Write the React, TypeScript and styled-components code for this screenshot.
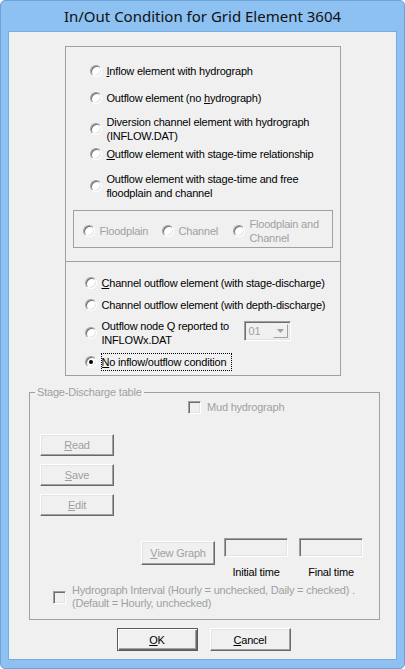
import React from 'react';
import styled, { createGlobalStyle } from 'styled-components';

const GlobalStyle = createGlobalStyle`
  html, body {
    margin: 0;
    padding: 0;
    background: #ffffff;
  }
  body {
    font-family: "Liberation Sans", Arial, sans-serif;
  }
  * {
    box-sizing: border-box;
  }
`;

const Window = styled.div`
  width: 405px;
  height: 669px;
  display: flex;
  flex-direction: column;
  background: #8cc1f2;
  border: 1px solid #6fa3d8;
  border-radius: 5px;
  overflow: hidden;
`;

const TitleBar = styled.div`
  height: 30px;
  display: flex;
  align-items: center;
  justify-content: center;
  font-family: "Noto Sans", "Open Sans", sans-serif;
  font-size: 15px;
  color: #111;
`;

const Client = styled.div`
  flex: 1;
  margin: 0 7px 8px;
  background: #f0f0f0;
  border: 1px solid #78abdf;
  display: flex;
  flex-direction: column;
`;

const OptionsStack = styled.div`
  width: 276px;
  margin: 14px auto 0;
  display: flex;
  flex-direction: column;
`;

const Panel = styled.div<{ $joined?: boolean; $padX: number; $padLeft?: number; $padBottom: number }>`
  border: 1px solid #a0a0a0;
  border-top: ${(p) => (p.$joined ? 'none' : '1px solid #a0a0a0')};
  padding: 0 ${(p) => p.$padX}px ${(p) => p.$padBottom}px ${(p) => p.$padLeft ?? p.$padX}px;
  display: flex;
  flex-direction: column;
  align-items: flex-start;
`;

const OptionRow = styled.div<{ $mt: number; $indent?: number }>`
  display: flex;
  align-items: center;
  gap: 5px;
  margin-top: ${(p) => p.$mt}px;
  padding-left: ${(p) => p.$indent ?? 0}px;
`;

const Label = styled.span<{ $disabled?: boolean; $w?: number; $lh?: number }>`
  font-size: 11px;
  line-height: ${(p) => p.$lh ?? 14}px;
  letter-spacing: -0.2px;
  color: ${(p) => (p.$disabled ? '#a0a0a0' : '#000')};
  white-space: nowrap;
  ${(p) => (p.$w ? `width: ${p.$w}px;` : '')}
`;

const Key = styled.span`
  text-decoration: underline;
  text-underline-offset: 1px;
`;

const Radio = styled.span<{ $checked?: boolean }>`
  position: relative;
  flex: none;
  width: 12px;
  height: 12px;
  border-radius: 50%;
  background: #ffffff;
  border: 1px solid;
  border-color: #a0a0a0 #ffffff #ffffff #a0a0a0;
  box-shadow: inset 1px 1px 0 #6e6e6e, inset -1px -1px 0 #e3e3e3;
  &::after {
    content: '';
    display: ${(p) => (p.$checked ? 'block' : 'none')};
    position: absolute;
    left: 3px;
    top: 3px;
    width: 4px;
    height: 4px;
    border-radius: 50%;
    background: #000;
  }
`;

const Checkbox = styled.span`
  flex: none;
  width: 13px;
  height: 13px;
  background: #f0f0f0;
  border: 1px solid;
  border-color: #a0a0a0 #ffffff #ffffff #a0a0a0;
  box-shadow: inset 1px 1px 0 #6e6e6e, inset -1px -1px 0 #e3e3e3;
`;

const SubGroup = styled.div`
  margin-top: 10px;
  width: 260px;
  height: 38px;
  border: 1px solid #a0a0a0;
  display: flex;
  align-items: center;
  padding: 3px 0 0 9px;
`;

const SubItem = styled.div<{ $w?: number }>`
  display: flex;
  align-items: center;
  gap: 5px;
  ${(p) => (p.$w ? `width: ${p.$w}px;` : '')}
`;

const Combo = styled.div`
  align-self: flex-start;
  margin-top: 2px;
  width: 47px;
  height: 20px;
  display: flex;
  align-items: stretch;
  background: #f0f0f0;
  border: 1px solid;
  border-color: #a0a0a0 #ffffff #ffffff #a0a0a0;
  box-shadow: inset 1px 1px 0 #6e6e6e, inset -1px -1px 0 #e3e3e3;
  padding: 2px;
`;

const ComboText = styled.span`
  flex: 1;
  font-size: 11px;
  line-height: 14px;
  color: #a0a0a0;
  padding-left: 2px;
`;

const ComboArrow = styled.span`
  width: 15px;
  display: flex;
  align-items: center;
  justify-content: center;
  background: #f0f0f0;
  border: 1px solid;
  border-color: #f4f4f4 #a0a0a0 #a0a0a0 #f4f4f4;
`;

const FocusLabel = styled.span`
  width: 131px;
  overflow: hidden;
  border: 1px dotted #000;
  padding: 1px 0 1px 0;
  font-size: 11px;
  line-height: 14px;
  letter-spacing: -0.2px;
  white-space: nowrap;
  color: #000;
`;

const StageGroup = styled.fieldset`
  margin: 9px 0 0 20px;
  width: 351px;
  min-width: 0;
  border: 1px solid #a0a0a0;
  padding: 0 0 9px 0;
  display: flex;
  flex-direction: column;
  align-items: flex-start;
`;

const Legend = styled.legend`
  margin-left: 5px;
  padding: 0 2px;
  font-size: 11px;
  line-height: 14px;
  letter-spacing: -0.2px;
  color: #a0a0a0;
`;

const CheckRow = styled.div<{ $mt: number; $indent: number }>`
  display: flex;
  align-items: center;
  gap: 6px;
  margin-top: ${(p) => p.$mt}px;
  padding-left: ${(p) => p.$indent}px;
`;

const ButtonColumn = styled.div`
  margin: 20px 0 0 10px;
  display: flex;
  flex-direction: column;
  gap: 8px;
`;

const ClassicButton = styled.div<{ $h?: number; $disabled?: boolean }>`
  width: 74px;
  height: ${(p) => p.$h ?? 22}px;
  display: flex;
  align-items: center;
  justify-content: center;
  background: #f0f0f0;
  border: 1px solid;
  border-color: #ffffff #696969 #696969 #ffffff;
  box-shadow: inset -1px -1px 0 #a0a0a0, inset 1px 1px 0 #e3e3e3;
  font-size: 11px;
  letter-spacing: -0.2px;
  color: ${(p) => (p.$disabled ? '#a0a0a0' : '#000')};
`;

const GraphRow = styled.div`
  margin-top: 22px;
  padding-left: 111px;
  display: flex;
  align-items: flex-start;
  gap: 9px;
`;

const GraphButton = styled(ClassicButton)`
  margin-top: 3px;
  margin-right: 0;
`;

const TimeFields = styled.div`
  display: flex;
  gap: 11px;
`;

const TimeField = styled.div`
  width: 64px;
  display: flex;
  flex-direction: column;
  align-items: center;
`;

const TimeBox = styled.div`
  width: 64px;
  height: 19px;
  background: #f0f0f0;
  border: 1px solid;
  border-color: #a0a0a0 #ffffff #ffffff #a0a0a0;
  box-shadow: inset 1px 1px 0 #6e6e6e, inset -1px -1px 0 #e3e3e3;
`;

const TimeLabel = styled.span`
  margin-top: 8px;
  font-size: 11px;
  line-height: 14px;
  letter-spacing: -0.2px;
  color: #000;
  white-space: nowrap;
`;

const Footer = styled.div`
  margin-top: 8px;
  padding-left: 2px;
  display: flex;
  justify-content: center;
  gap: 12px;
`;

const DialogButton = styled.div<{ $primary?: boolean }>`
  width: 81px;
  height: 23px;
  display: flex;
  align-items: center;
  justify-content: center;
  background: #f0f0f0;
  font-size: 11px;
  letter-spacing: -0.2px;
  color: #000;
  border: 1px solid;
  border-color: ${(p) => (p.$primary ? '#5a5a5a' : '#ffffff #696969 #696969 #ffffff')};
  box-shadow: ${(p) =>
    p.$primary
      ? 'inset 1px 1px 0 #ffffff, inset -1px -1px 0 #696969, inset -2px -2px 0 #a0a0a0'
      : 'inset -1px -1px 0 #a0a0a0, inset 1px 1px 0 #e3e3e3'};
`;

function ArrowDown() {
  return (
    <svg width="7" height="4" viewBox="0 0 7 4">
      <path d="M0 0 H7 L3.5 4 Z" fill="#a0a0a0" />
    </svg>
  );
}

export default function App() {
  return (
    <>
      <GlobalStyle />
      <Window>
        <TitleBar>In/Out Condition for Grid Element 3604</TitleBar>
        <Client>
          <OptionsStack>
            <Panel $padX={7} $padBottom={13}>
              <OptionRow $mt={17} $indent={17}>
                <Radio />
                <Label>
                  <Key>I</Key>nflow element with hydrograph
                </Label>
              </OptionRow>
              <OptionRow $mt={13} $indent={17}>
                <Radio />
                <Label>
                  Outflow element (no <Key>h</Key>ydrograph)
                </Label>
              </OptionRow>
              <OptionRow $mt={10} $indent={17}>
                <Radio />
                <Label>
                  Diversion channel element with hydrograph
                  <br />
                  (INFLOW.DAT)
                </Label>
              </OptionRow>
              <OptionRow $mt={4} $indent={17}>
                <Radio />
                <Label>
                  <Key>O</Key>utflow element with stage-time relationship
                </Label>
              </OptionRow>
              <OptionRow $mt={11} $indent={17}>
                <Radio />
                <Label>
                  Outflow element with stage-time and free
                  <br />
                  floodplain and channel
                </Label>
              </OptionRow>
              <SubGroup>
                <SubItem $w={79}>
                  <Radio />
                  <Label $disabled>Floodplain</Label>
                </SubItem>
                <SubItem $w={71}>
                  <Radio />
                  <Label $disabled>Channel</Label>
                </SubItem>
                <SubItem>
                  <Radio />
                  <Label $disabled>
                    Floodplain and
                    <br />
                    Channel
                  </Label>
                </SubItem>
              </SubGroup>
            </Panel>
            <Panel $joined $padX={0} $padLeft={19} $padBottom={4}>
              <OptionRow $mt={14}>
                <Radio />
                <Label>
                  <Key>C</Key>hannel outflow element (with stage-discharge)
                </Label>
              </OptionRow>
              <OptionRow $mt={8}>
                <Radio />
                <Label>Channel outflow element (with depth-discharge)</Label>
              </OptionRow>
              <OptionRow $mt={7}>
                <Radio />
                <Label $w={137}>
                  Outflow node Q reported to
                  <br />
                  INFLOWx.DAT
                </Label>
                <Combo>
                  <ComboText>01</ComboText>
                  <ComboArrow>
                    <ArrowDown />
                  </ComboArrow>
                </Combo>
              </OptionRow>
              <OptionRow $mt={6} style={{ gap: 4 }}>
                <Radio $checked />
                <FocusLabel>
                  <Key>N</Key>o inflow/outflow condition
                </FocusLabel>
              </OptionRow>
            </Panel>
          </OptionsStack>

          <StageGroup>
            <Legend>Stage-Discharge table</Legend>
            <CheckRow $mt={1} $indent={158}>
              <Checkbox />
              <Label $disabled>Mud hydrograph</Label>
            </CheckRow>
            <ButtonColumn>
              <ClassicButton $disabled>
                <Key>R</Key>ead
              </ClassicButton>
              <ClassicButton $disabled>
                <Key>S</Key>ave
              </ClassicButton>
              <ClassicButton $disabled>
                <Key>E</Key>dit
              </ClassicButton>
            </ButtonColumn>
            <GraphRow>
              <GraphButton $disabled $h={24}>
                <Key>V</Key>iew Graph
              </GraphButton>
              <TimeFields>
                <TimeField>
                  <TimeBox />
                  <TimeLabel>Initial time</TimeLabel>
                </TimeField>
                <TimeField>
                  <TimeBox />
                  <TimeLabel>Final time</TimeLabel>
                </TimeField>
              </TimeFields>
            </GraphRow>
            <CheckRow $mt={5} $indent={23}>
              <Checkbox />
              <Label $disabled $lh={13}>
                Hydrograph Interval (Hourly = unchecked, Daily = checked) .
                <br />
                (Default = Hourly, unchecked)
              </Label>
            </CheckRow>
          </StageGroup>

          <Footer>
            <DialogButton $primary>
              <Key>O</Key>K
            </DialogButton>
            <DialogButton>
              <Key>C</Key>ancel
            </DialogButton>
          </Footer>
        </Client>
      </Window>
    </>
  );
}
